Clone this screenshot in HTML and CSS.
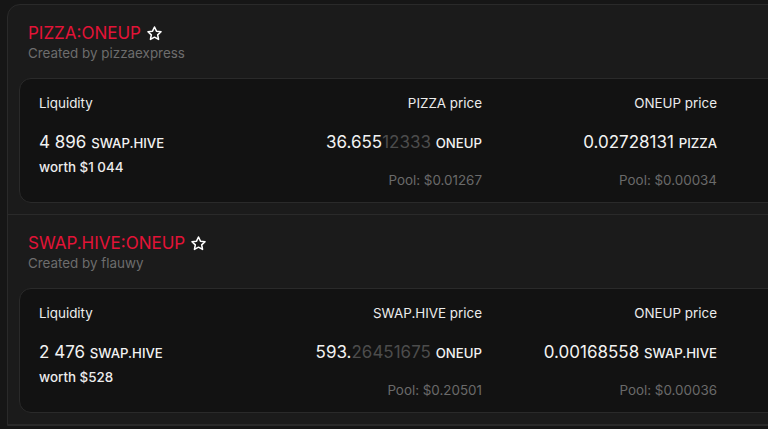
FILE: index.html
```html
<!DOCTYPE html>
<html>
<head>
<meta charset="utf-8">
<link rel="stylesheet" href="styles.css">
</head>
<body>
<div class="panel">
  <div class="item">
    <div class="head">
      <div class="title"><span class="pair">PIZZA:ONEUP</span>
        <svg class="star" viewBox="0 0 24 24" width="17" height="17"><path d="M12 2.8l2.8 5.9 6.4.8-4.7 4.4 1.2 6.4L12 17.2l-5.7 3.1 1.2-6.4-4.7-4.4 6.4-.8z" fill="none" stroke="#fff" stroke-width="2.2" stroke-linejoin="round"/></svg>
      </div>
      <div class="creator">Created by pizzaexpress</div>
    </div>
    <div class="card">
      <div class="col left">
        <div class="label">Liquidity</div>
        <div class="value">4 896 <span class="unit">SWAP.HIVE</span></div>
        <div class="worth">worth $1 044</div>
      </div>
      <div class="col right">
        <div class="label">PIZZA price</div>
        <div class="value">36.655<span class="dim">12333</span> <span class="unit">ONEUP</span></div>
        <div class="pool">Pool: $0.01267</div>
      </div>
      <div class="col right">
        <div class="label">ONEUP price</div>
        <div class="value">0.02728131 <span class="unit">PIZZA</span></div>
        <div class="pool">Pool: $0.00034</div>
      </div>
    </div>
  </div>
  <div class="item">
    <div class="head">
      <div class="title"><span class="pair">SWAP.HIVE:ONEUP</span>
        <svg class="star" viewBox="0 0 24 24" width="17" height="17"><path d="M12 2.8l2.8 5.9 6.4.8-4.7 4.4 1.2 6.4L12 17.2l-5.7 3.1 1.2-6.4-4.7-4.4 6.4-.8z" fill="none" stroke="#fff" stroke-width="2.2" stroke-linejoin="round"/></svg>
      </div>
      <div class="creator">Created by flauwy</div>
    </div>
    <div class="card">
      <div class="col left">
        <div class="label">Liquidity</div>
        <div class="value">2 476 <span class="unit">SWAP.HIVE</span></div>
        <div class="worth">worth $528</div>
      </div>
      <div class="col right">
        <div class="label">SWAP.HIVE price</div>
        <div class="value">593.<span class="dim">26451675</span> <span class="unit">ONEUP</span></div>
        <div class="pool">Pool: $0.20501</div>
      </div>
      <div class="col right">
        <div class="label">ONEUP price</div>
        <div class="value">0.00168558 <span class="unit">SWAP.HIVE</span></div>
        <div class="pool">Pool: $0.00036</div>
      </div>
    </div>
  </div>
</div>
</body>
</html>
```
FILE: styles.css
```css
html, body {
  margin: 0;
  padding: 0;
  background: #161616;
  overflow: hidden;
  height: 429px;
  width: 768px;
}
body {
  font-family: Inter, "Noto Sans", sans-serif;
  color: #ececec;
  padding: 4px 0 0 7px;
  box-sizing: border-box;
}
.panel {
  width: 900px;
  background: #1b1b1b;
  border: 1px solid #2a2a2a;
  border-radius: 13px 0 0 0;
}
.item {
  padding: 11px 11px 11px 11px;
  border-bottom: 1px solid #2a2a2a;
}
.head {
  padding: 7px 9px 15px 9px;
}
.title {
  display: flex;
  align-items: center;
  gap: 5px;
  height: 20px;
}
.pair {
  color: #e31337;
  font-size: 17px;
  line-height: 20px;
}
.star {
  display: block;
}
.creator {
  color: #6d6d6d;
  font-size: 13.4px;
  line-height: 20px;
}
.card {
  background: #121212;
  border: 1px solid #2a2a2a;
  border-radius: 12px 0 0 12px;
  padding: 14px 19px 12px 19px;
  display: grid;
  grid-template-columns: 208px 208px 208px;
  column-gap: 27px;
  height: 125px;
  box-sizing: border-box;
}
.col {
  display: flex;
  flex-direction: column;
}
.col.right {
  align-items: flex-end;
  text-align: right;
}
.label {
  font-size: 13.4px;
  line-height: 20px;
  color: #ececec;
  font-weight: 400;
}
.value {
  margin-top: 17px;
  font-size: 17px;
  line-height: 24px;
  color: #f2f2f2;
  white-space: nowrap;
}
.unit {
  font-size: 13.2px;
  font-weight: 500;
}
.dim {
  color: #4c4c4c;
}
.worth {
  margin-top: 2px;
  font-size: 13.4px;
  line-height: 20px;
  color: #ececec;
  font-weight: 500;
}
.pool {
  margin-top: 15px;
  font-size: 13.4px;
  line-height: 20px;
  color: #6a6a6a;
}
```
